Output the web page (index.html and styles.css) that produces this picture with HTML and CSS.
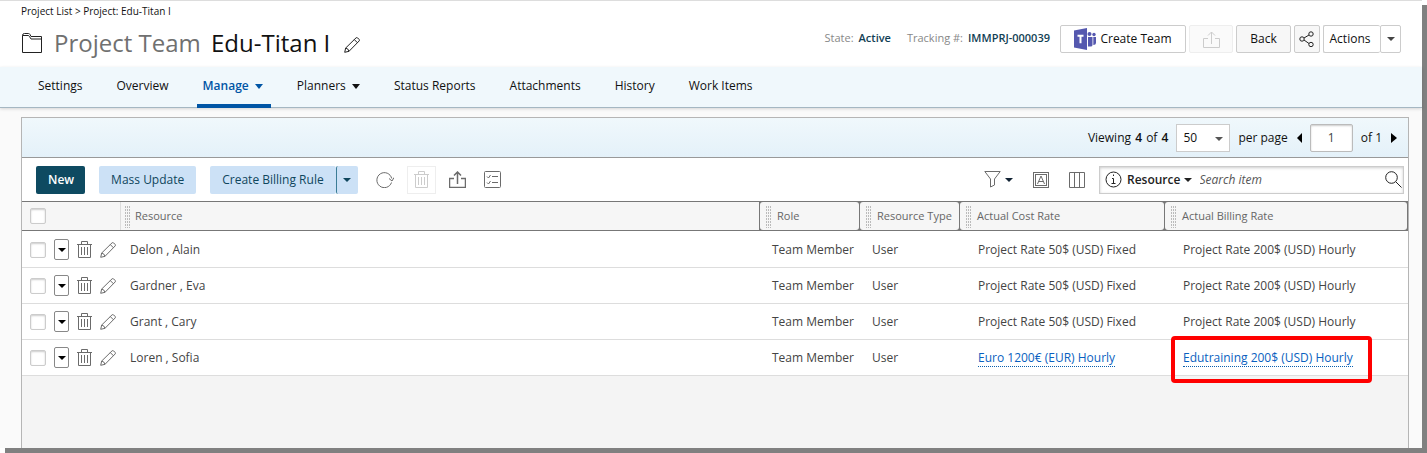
FILE: index.html
```html
<!DOCTYPE html>
<html lang="en">
<head>
  <meta charset="UTF-8">
  <title>Project Team Edu-Titan I</title>
  <link rel="stylesheet" href="styles.css">
</head>
<body>
  <!-- Shared icons -->
  <svg class="sprite" aria-hidden="true">
    <symbol id="trash" viewBox="0 0 15 18">
      <path d="M0 3.5h15M4.500 3.500v-3h6v3M1.500 3.500v13h12v-13M4.500 6v8M7.500 6v8M10.500 6v8"/>
    </symbol>
    <symbol id="pencil" viewBox="0 0 16 16">
      <path d="M.7 15.300l1-4.300L12 .9q.8-.7 1.600 0l1.500 1.500q.8.8 0 1.600L5 14.300zM1.700 11q2.600.5 3.300 3.300M10.300 2.600l3.200 3.200"/>
    </symbol>
    <symbol id="export" viewBox="0 0 17 17">
      <path d="M5 7.500H.5v9h16v-9H12M8.500 13V1M5 4.500L8.500 1 12 4.500"/>
    </symbol>
  </svg>

  <div class="page">
    <header>
      <div class="breadcrumb"><a href="#">Project List</a> &gt; <a href="#">Project: Edu-Titan I</a></div>
      <div class="titlebar">
        <svg class="folder" viewBox="0 0 20 20"><path d="M.5 19.500v-17q0-2 2-2h4q1 0 1.500 1l1 2h10.500v16zM.500 2.500h5.500q1 0 1.500 1l1.500 2.500h10.500"/></svg>
        <h1><span>Project Team</span> Edu-Titan I</h1>
        <button class="plain" aria-label="Edit title"><svg class="icon16 dark"><use href="#pencil"/></svg></button>
        <div class="meta">
          <span>State:</span><b>Active</b>
          <span class="tracking">Tracking #:</span><b>IMMPRJ-000039</b>
        </div>
        <div class="actions">
          <button class="btn teams">
            <svg viewBox="0 0 22 22" class="logo">
              <circle cx="15.500" cy="6" r="2"/><circle cx="20" cy="6.500" r="1.700"/>
              <path d="M14 9h4.500v8q0 1.500-2 1.500H14zM19.300 9H22v6q0 2-2.700 2zM0 2.500L13 0v22L0 19.500z"/>
              <path class="letter" d="M3.500 7.800h6M6.500 7.800v7.500"/>
            </svg>
            Create Team
          </button>
          <button class="btn upload" disabled aria-label="Export"><svg class="icon17"><use href="#export"/></svg></button>
          <button class="btn back">Back</button>
          <button class="btn share" aria-label="Share">
            <svg viewBox="0 0 16 16" class="icon16 dark"><circle cx="3" cy="8" r="2.200"/><circle cx="12" cy="3" r="2.200"/><circle cx="12" cy="13.500" r="2.200"/><path d="M5 7l5-3M5 9l5 3.500"/></svg>
          </button>
          <div class="split">
            <button class="btn">Actions</button><button class="btn" aria-label="More actions"><i class="caret small"></i></button>
          </div>
        </div>
      </div>
    </header>

    <nav>
      <a href="#">Settings</a>
      <a href="#">Overview</a>
      <a href="#" class="active">Manage <i class="caret"></i></a>
      <a href="#">Planners <i class="caret"></i></a>
      <a href="#">Status Reports</a>
      <a href="#">Attachments</a>
      <a href="#">History</a>
      <a href="#">Work Items</a>
    </nav>

    <main class="panel">
      <div class="pager">
        <span>Viewing <b>4</b> of <b>4</b></span>
        <div class="select">
          <select id="pageSize"><option>50</option></select>
          <i class="caret small"></i>
        </div>
        <label for="pageSize">per page</label>
        <button class="plain" aria-label="Previous page"><i class="prev"></i></button>
        <input type="text" value="1" aria-label="Page number">
        <span>of 1</span>
        <button class="plain" aria-label="Next page"><i class="next"></i></button>
      </div>

      <div class="toolbar">
        <button class="tool primary">New</button>
        <button class="tool">Mass Update</button>
        <div class="tool-split">
          <button class="tool">Create Billing Rule</button><button class="tool" aria-label="More rules"><i class="caret small"></i></button>
        </div>
        <div class="icons">
          <button class="plain" aria-label="Refresh"><svg viewBox="0 0 18 17" class="icon18"><path d="M15.500 11.500A7.500 7.500 0 1 1 15.700 7.500M13 7.500l3 2.500 2-3.500"/></svg></button>
          <button class="boxed" disabled aria-label="Delete"><svg class="bin"><use href="#trash"/></svg></button>
          <button class="plain" aria-label="Export list"><svg class="icon17 bold"><use href="#export"/></svg></button>
          <button class="plain" aria-label="Checklist"><svg viewBox="0 0 17 17" class="icon17"><rect x=".5" y=".5" width="16" height="16" rx="1"/><path d="M8 5.500h6M8 11.500h6M3 5.500l1.500 1.500 2-3M3 11.500L4.500 13l2-3"/></svg></button>
        </div>
        <div class="icons filters">
          <button class="plain filter" aria-label="Filter"><svg viewBox="0 0 17 17" class="icon17"><path d="M.8.500h15.400L10.500 8v6l-4 2V8z"/></svg><i class="caret small"></i></button>
          <button class="plain" aria-label="Text"><svg viewBox="0 0 16 16" class="icon16"><rect x=".5" y=".5" width="15" height="15"/><rect x="2.500" y="2.500" width="11" height="11"/><path d="M4.500 12L8 4l3.500 8M5.800 9.500h4.400"/></svg></button>
          <button class="plain" aria-label="Columns"><svg viewBox="0 0 16 16" class="icon16"><path d="M.5.5h15v15H.5zM5.500.5v15M10.500.5v15"/></svg></button>
        </div>
        <div class="search">
          <svg viewBox="0 0 17 17" class="icon17 dark"><circle cx="8.500" cy="8.500" r="7.500"/><path d="M8.500 3.500v1.500M7 7.500h1.500v5M6.500 12.500h4"/></svg>
          <button class="plain field">Resource <i class="caret small"></i></button>
          <input type="text" placeholder="Search item" aria-label="Search item">
          <button class="plain" aria-label="Search"><svg viewBox="0 0 17 17" class="icon17 dark"><circle cx="6.500" cy="6.500" r="5.800"/><path d="M10.800 10.800l5.700 5.700"/></svg></button>
        </div>
      </div>

      <table>
        <colgroup><col class="c-tools"><col><col class="c-role"><col class="c-role"><col class="c-cost"><col class="c-bill"></colgroup>
        <thead>
          <tr>
            <th><div class="head first"><input type="checkbox" aria-label="Select all"></div></th>
            <th><div class="head grip">Resource</div></th>
            <th class="notch"><div class="head grip">Role</div></th>
            <th class="notch"><div class="head grip">Resource Type</div></th>
            <th class="notch"><div class="head grip">Actual Cost Rate</div></th>
            <th class="notch last"><div class="head grip">Actual Billing Rate</div></th>
          </tr>
        </thead>
        <tbody>
          <tr>
            <td><div class="tools"><input type="checkbox" aria-label="Select Delon, Alain"><button class="menu" aria-label="Row menu"><i class="caret small"></i></button><button class="plain" aria-label="Delete"><svg class="bin"><use href="#trash"/></svg></button><button class="plain" aria-label="Edit"><svg class="icon16"><use href="#pencil"/></svg></button></div></td>
            <td>Delon , Alain</td>
            <td class="kind">Team Member</td>
            <td class="kind">User</td>
            <td class="rate">Project Rate 50$ (USD) Fixed</td>
            <td class="rate">Project Rate 200$ (USD) Hourly</td>
          </tr>
          <tr>
            <td><div class="tools"><input type="checkbox" aria-label="Select Gardner, Eva"><button class="menu" aria-label="Row menu"><i class="caret small"></i></button><button class="plain" aria-label="Delete"><svg class="bin"><use href="#trash"/></svg></button><button class="plain" aria-label="Edit"><svg class="icon16"><use href="#pencil"/></svg></button></div></td>
            <td>Gardner , Eva</td>
            <td class="kind">Team Member</td>
            <td class="kind">User</td>
            <td class="rate">Project Rate 50$ (USD) Fixed</td>
            <td class="rate">Project Rate 200$ (USD) Hourly</td>
          </tr>
          <tr>
            <td><div class="tools"><input type="checkbox" aria-label="Select Grant, Cary"><button class="menu" aria-label="Row menu"><i class="caret small"></i></button><button class="plain" aria-label="Delete"><svg class="bin"><use href="#trash"/></svg></button><button class="plain" aria-label="Edit"><svg class="icon16"><use href="#pencil"/></svg></button></div></td>
            <td>Grant , Cary</td>
            <td class="kind">Team Member</td>
            <td class="kind">User</td>
            <td class="rate">Project Rate 50$ (USD) Fixed</td>
            <td class="rate">Project Rate 200$ (USD) Hourly</td>
          </tr>
          <tr>
            <td><div class="tools"><input type="checkbox" aria-label="Select Loren, Sofia"><button class="menu" aria-label="Row menu"><i class="caret small"></i></button><button class="plain" aria-label="Delete"><svg class="bin"><use href="#trash"/></svg></button><button class="plain" aria-label="Edit"><svg class="icon16"><use href="#pencil"/></svg></button></div></td>
            <td>Loren , Sofia</td>
            <td class="kind">Team Member</td>
            <td class="kind">User</td>
            <td class="rate"><a href="#">Euro 1200€ (EUR) Hourly</a></td>
            <td class="rate marked"><a href="#">Edutraining 200$ (USD) Hourly</a></td>
          </tr>
        </tbody>
      </table>
    </main>
  </div>
</body>
</html>
```
FILE: styles.css
```css
* {
  box-sizing: border-box;
}
body {
  margin: 0;
  background: #fff;
  color: #111;
  font-family: "Open Sans", sans-serif;
  font-size: 12px;
  line-height: 16px;
}
button, input, select {
  font: inherit;
  color: inherit;
  margin: 0;
}
a {
  color: inherit;
  text-decoration: none;
}
b {
  font-weight: 600;
}
svg {
  display: block;
  flex: none;
  fill: none;
  stroke: #6b6b6b;
}
.sprite {
  position: absolute;
  width: 0;
  height: 0;
}
.icon16 { width: 16px; height: 16px; }
.icon17 { width: 17px; height: 17px; }
.icon18 { width: 18px; height: 17px; }
.bin { width: 15px; height: 18px; }
.dark { stroke: #222; }
.plain {
  padding: 0;
  border: none;
  background: none;
}

/* Arrows */
.caret {
  display: inline-block;
  border: 4px solid transparent;
  border-top: 5px solid currentColor;
  border-bottom: none;
}
.caret.small {
  border-top-width: 4px;
}
.prev, .next {
  display: block;
  border: 5px solid transparent;
}
.prev {
  border-right-color: #000;
  border-left: none;
}
.next {
  border-left: 6px solid #000;
  border-right: none;
}

/* Page frame with hard shadow */
.page {
  display: flex;
  flex-direction: column;
  min-height: calc(100vh - 5px);
  margin: 0 5px 5px 0;
  background: #fafafa;
  box-shadow: 5px 5px 0 #808080;
}
header {
  height: 67px;
  padding: 2px 21px 0;
  border-top: 1px solid #ddd;
  background: #fff;
}
.breadcrumb {
  font-size: 10px;
}
.titlebar {
  display: flex;
  align-items: flex-start;
  padding-top: 6px;
}
.folder {
  width: 20px;
  height: 20px;
  margin: 8px 12px 0 1px;
  stroke: #222;
}
h1 {
  margin: 2px 14px 0 0;
  font-size: 24px;
  line-height: 32px;
  font-weight: 400;
  white-space: pre;
}
h1 span {
  color: #707070;
  margin-right: 4px;
}
.titlebar > .plain {
  margin-top: 12px;
}
.meta {
  display: flex;
  margin: 5px 10px 0 auto;
  font-size: 11px;
  color: #888;
}
.meta b {
  margin-left: 5px;
  color: #123f55;
}
.tracking {
  margin-left: 16px;
}
.actions {
  display: flex;
  gap: 3px;
}
.btn {
  display: flex;
  align-items: center;
  justify-content: center;
  height: 28px;
  padding: 0;
  border: 1px solid #ccc;
  border-radius: 2px;
  background: #fff;
}
.teams {
  width: 126px;
  gap: 4px;
}
.logo {
  width: 22px;
  height: 22px;
  fill: #5558af;
  stroke: none;
}
.letter {
  stroke: #fff;
  stroke-width: 2;
}
.upload {
  width: 44px;
  background: #fafafa;
  border-color: #eee;
}
.upload svg, .boxed svg {
  stroke: #ccc;
}
.back {
  width: 55px;
  background: #f7f7f7;
}
.share {
  width: 26px;
  background: #f7f7f7;
}
.split {
  display: flex;
}
.split .btn:first-child {
  width: 57px;
  padding-right: 4px;
  border-right: none;
}
.split .btn:last-child {
  width: 21px;
  color: #444;
}

/* Tabs */
nav {
  display: flex;
  gap: 20px;
  height: 41px;
  padding-left: 32px;
  background: #f0f8fc;
  border-bottom: 1px solid #a5b7c2;
  box-shadow: 0 1px 3px rgba(0, 0, 0, .15);
}
nav a {
  height: 41px;
  padding: 11px 8px 0 6px;
  white-space: nowrap;
}
nav .caret {
  margin-left: 3px;
  vertical-align: 1px;
}
nav .active {
  color: #0055a5;
  font-weight: 600;
  border-bottom: 4px solid #0055a5;
}

.panel {
  flex: 1;
  margin: 9px 13px 0 21px;
  border: 1px solid #b5b5b5;
  border-bottom: none;
  background: #f4f4f4;
}
.pager {
  display: flex;
  align-items: center;
  justify-content: flex-end;
  height: 40px;
  padding-right: 11px;
  background: linear-gradient(#f0f8fc, #e4f1f9);
  border-bottom: 1px solid #999;
}
.pager b {
  margin: 0 1px;
}
.select {
  position: relative;
  margin: 0 8px 0 7px;
}
.select select {
  appearance: none;
  display: block;
  width: 54px;
  height: 28px;
  padding: 0 6px;
  border: 1px solid #ccc;
  border-radius: 0;
  background: #fff;
}
.select .caret {
  position: absolute;
  right: 7px;
  top: 13px;
  color: #555;
}
.pager .plain:nth-of-type(1) {
  margin-left: 9px;
}
.pager input {
  width: 43px;
  height: 28px;
  margin: 0 8px;
  padding: 0;
  border: 1px solid #bbb;
  border-radius: 2px;
  box-shadow: inset 0 1px 2px #ccc;
  text-align: center;
  color: #444;
}
.pager span + .plain {
  margin-left: 9px;
}

/* Toolbar */
.toolbar {
  display: flex;
  align-items: center;
  gap: 14px;
  height: 43px;
  padding: 0 4px 0 14px;
  background: #fff;
}
.tool {
  height: 28px;
  padding: 0 12px;
  border: none;
  border-radius: 2px;
  background: #cce1f6;
  color: #0f465d;
  white-space: nowrap;
}
.primary {
  padding: 0 11px 0 12px;
  background: #0e4a61;
  color: #fff;
  font-weight: 600;
}
.tool-split {
  display: flex;
}
.tool-split .tool:last-child {
  display: flex;
  align-items: center;
  padding: 0 7px 0 6px;
  border-left: 1px solid #3b7c96;
}
.icons {
  display: flex;
  align-items: center;
  gap: 13px;
  margin-left: 4px;
}
.icons .plain + .plain {
  margin-left: 5px;
}
.boxed {
  display: flex;
  align-items: center;
  justify-content: center;
  width: 29px;
  height: 28px;
  padding: 0;
  border: 1px solid #eee;
  background: #fff;
}
.bold {
  stroke-width: 1.500;
}
.filters {
  margin-left: auto;
  gap: 15px;
}
.filter {
  display: flex;
  align-items: center;
  gap: 4px;
  color: #123;
}
.search {
  display: flex;
  align-items: center;
  width: 305px;
  height: 28px;
  padding: 0 1px 0 5px;
  border: 1px solid #ccc;
  box-shadow: inset 0 1px 3px #ccc;
}
.field {
  margin: 0 8px 0 5px;
  font-weight: 600;
  color: #222;
  white-space: nowrap;
}
.field .caret {
  vertical-align: 2px;
}
.search input {
  flex: 1;
  min-width: 0;
  padding: 0;
  border: none;
  outline: none;
  background: none;
  font-style: italic;
}
.search input::placeholder {
  color: #555;
}

/* Team grid */
table {
  width: 100%;
  table-layout: fixed;
  border-collapse: separate;
  border-spacing: 0;
}
.c-tools { width: 98px; }
.c-role { width: 100px; }
.c-cost { width: 205px; }
.c-bill { width: 244px; }
th {
  padding: 0;
  border: 1px solid #777;
  border-width: 1px 0;
  background: #f6f6f6;
  font-size: 11px;
  font-weight: 400;
  text-align: left;
  color: #666;
}
.head {
  position: relative;
  display: flex;
  align-items: center;
  height: 28px;
  padding-left: 14px;
  border-left: 1px solid #ddd;
  background: #f6f6f6;
  white-space: nowrap;
}
.head.first {
  padding-left: 8px;
  border: none;
}
.notch {
  background: #777;
}
.notch .head {
  margin-left: 1px;
  padding-left: 17px;
  border: none;
  border-radius: 3px;
}
.last .head {
  margin-right: 1px;
}
/* drag handle dots */
.grip::before {
  content: "";
  position: absolute;
  left: 4px;
  top: 3px;
  width: 5px;
  height: 23px;
  background: repeating-linear-gradient(#f6f6f6 0 1px, transparent 1px 3px), repeating-linear-gradient(90deg, #bbb 0 1px, #f6f6f6 1px 2px);
}
.notch .grip::before {
  left: 6px;
}
td {
  height: 36px;
  padding: 0 0 0 10px;
  border-bottom: 1px solid #ddd;
  background: #fff;
  color: #444;
  white-space: nowrap;
}
td:first-child {
  padding-left: 8px;
}
tbody tr:first-child td {
  height: 37px;
  padding-top: 1px;
}
.kind {
  padding-left: 13px;
}
.rate {
  padding-left: 19px;
}
.rate a {
  display: inline-block;
  line-height: 17px;
  border-bottom: 1px dotted #0a5fae;
  color: #0a5fc0;
}
.marked {
  position: relative;
}
.marked::after {
  content: "";
  position: absolute;
  box-sizing: border-box;
  left: 7px;
  top: -4px;
  width: 201px;
  height: 47px;
  border: 4px solid #f00;
  border-radius: 4px;
  pointer-events: none;
}
.tools {
  display: flex;
  align-items: center;
  gap: 8px;
}
input[type="checkbox"] {
  appearance: none;
  width: 16px;
  height: 16px;
  border: 1px solid #ccc;
  border-radius: 2px;
  background: #fff;
  box-shadow: inset 0 1px 2px #ccc;
}
.menu {
  display: flex;
  align-items: center;
  justify-content: center;
  width: 15px;
  height: 21px;
  padding: 0;
  border: 1px solid #888;
  border-radius: 2px;
  background: #fff;
  color: #000;
}
```
